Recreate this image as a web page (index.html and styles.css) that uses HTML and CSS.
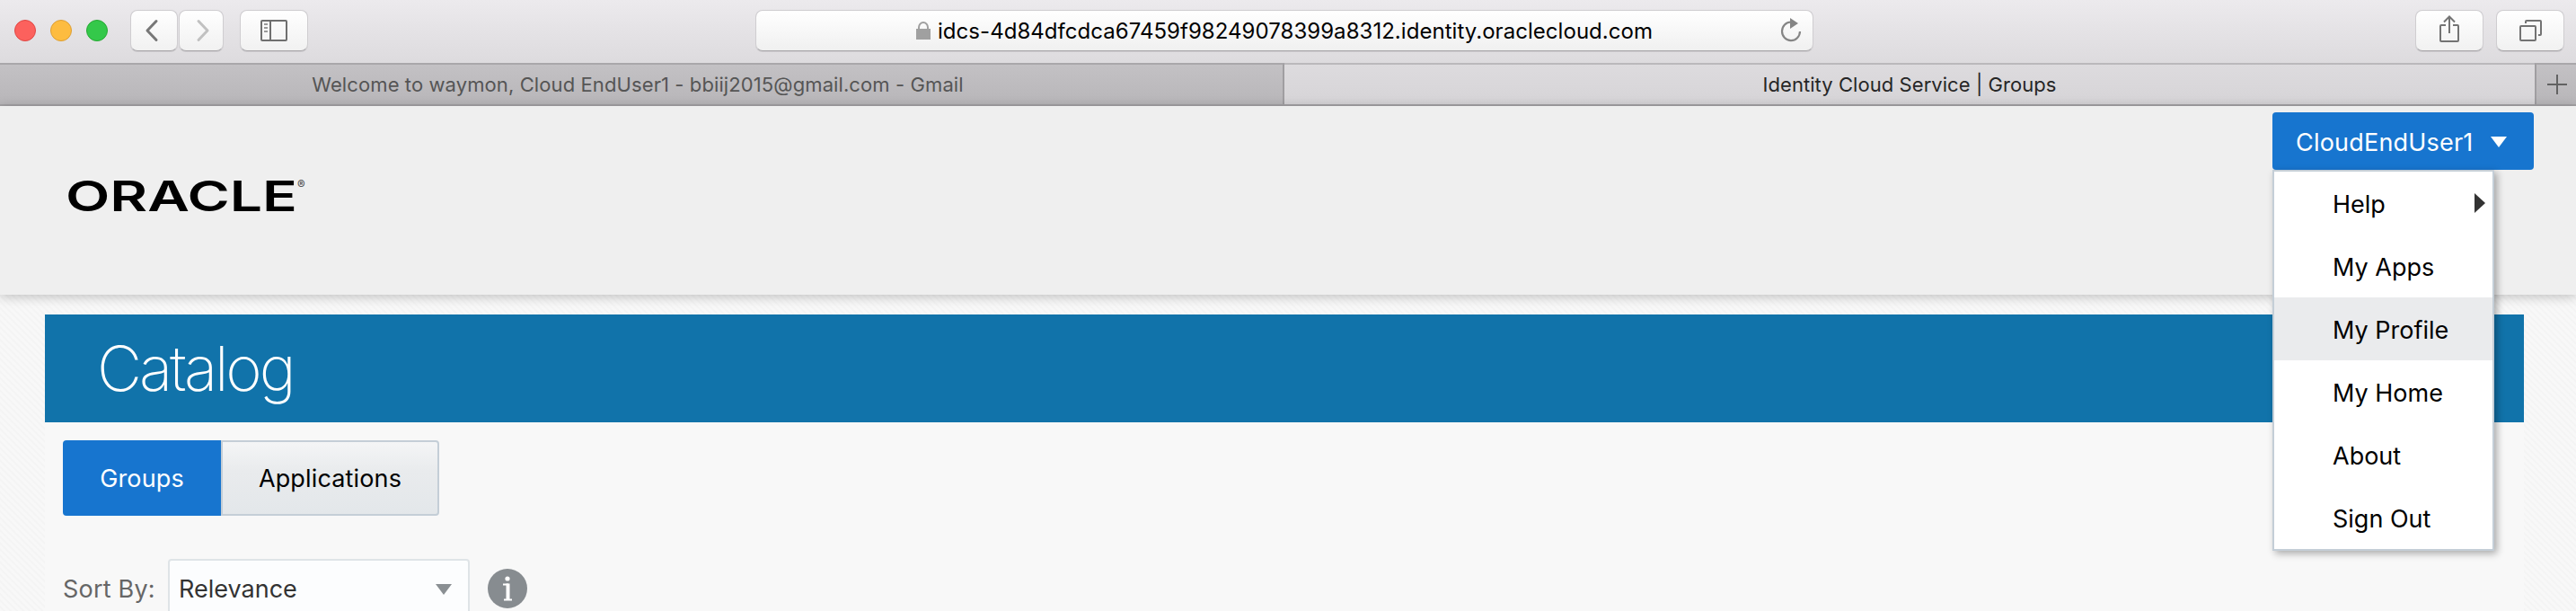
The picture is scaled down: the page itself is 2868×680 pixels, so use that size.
FILE: index.html
```html
<!DOCTYPE html>
<html lang="en">
<head>
<meta charset="utf-8">
<title>Identity Cloud Service | Groups</title>
<link rel="stylesheet" href="styles.css">
</head>
<body>
<div class="toolbar">
  <div class="lights"><i class="light red"></i><i class="light amber"></i><i class="light green"></i></div>
  <div class="nav">
    <div class="btn back"><svg width="16" height="26" viewBox="0 0 16 26"><path d="M13 2.500 3 13 13 23.500" fill="none" stroke="#777" stroke-width="3" stroke-linecap="round" stroke-linejoin="round"/></svg></div>
    <div class="btn forward"><svg width="16" height="26" viewBox="0 0 16 26"><path d="M3 2.500 13 13 3 23.500" fill="none" stroke="#c1c1c1" stroke-width="3" stroke-linecap="round" stroke-linejoin="round"/></svg></div>
  </div>
  <div class="btn wide"><svg width="30" height="24" viewBox="0 0 30 24" fill="none" stroke="#6f6f6f" stroke-width="2"><rect x="1" y="1" width="28" height="22" rx="1"/><path d="M11 1v22"/><path d="M4 5h4M4 9h4M4 13h4" stroke="#999"/></svg></div>
  <div class="address">
    <svg class="lock" width="16" height="20" viewBox="0 0 16 20"><rect y="8" width="16" height="12" fill="#a0a0a0"/><path d="M3 9V6.500a5 5.500 0 0 1 10 0V9" fill="none" stroke="#a0a0a0" stroke-width="2"/></svg>
    <span class="url">idcs-4d84dfcdca67459f98249078399a8312.identity.oraclecloud.com</span>
    <svg class="reload" width="24" height="28" viewBox="0 0 24 28"><path d="M12 4.500A10 10.300 0 1 0 22 15" fill="none" stroke="#858585" stroke-width="2.200"/><path d="M11 0 20 6 11 12z" fill="#858585"/></svg>
  </div>
  <div class="btn wide share"><svg width="24" height="32" viewBox="0 0 24 32" fill="none" stroke="#737373" stroke-width="2"><path d="M8 12H3q-1 0-1 1v16q0 1 1 1h18q1 0 1-1V13q0-1-1-1h-5"/><path d="M12 21V2.500M6 8.500 12 2.500 18 8.500"/></svg></div>
  <div class="btn wide tabs-btn"><svg width="26" height="26" viewBox="0 0 26 26" fill="none" stroke="#737373" stroke-width="2"><rect x="2" y="8" width="17" height="16" rx="1"/><path d="M8 5V3q0-1 1-1h15q1 0 1 1v14q0 1-1 1h-2"/></svg></div>
</div>
<div class="tabs">
  <div class="tab inactive"><span class="tab-one">Welcome to waymon, Cloud EndUser1 - bbiij2015@gmail.com - Gmail</span></div>
  <div class="tab active"><span class="tab-two">Identity Cloud Service | Groups</span></div>
  <div class="tab add"><svg width="22" height="22" viewBox="0 0 22 22"><path d="M11 0v22M0 11h22" stroke="#626262" stroke-width="2"/></svg></div>
</div>
<header class="header">
  <svg class="logo" width="270" height="40" viewBox="0 0 270 40"><text x="-3" y="36.500" textLength="258" lengthAdjust="spacingAndGlyphs" class="brand">ORACLE</text><text x="255" y="12" class="reg">®</text></svg>
  <div class="user">
    <div class="user-btn"><span>CloudEndUser1</span><svg width="18" height="12" viewBox="0 0 18 12"><path d="M0 0h18L9 12z" fill="#fff"/></svg></div>
    <div class="menu">
      <div class="item"><span>Help</span><svg width="12" height="22" viewBox="0 0 12 22"><path d="M0 0 12 11 0 22z" fill="#333"/></svg></div>
      <div class="item">My Apps</div>
      <div class="item hover">My Profile</div>
      <div class="item">My Home</div>
      <div class="item">About</div>
      <div class="item">Sign Out</div>
    </div>
  </div>
</header>
<main class="page">
  <div class="panel">
    <h1 class="banner"><span>Catalog</span></h1>
    <div class="switch"><div class="seg on">Groups</div><div class="seg off">Applications</div></div>
    <div class="sort">
      <span class="label">Sort By:</span>
      <div class="select"><span>Relevance</span><svg width="18" height="12" viewBox="0 0 18 12"><path d="M0 0h18L9 12z" fill="#8a8f93"/></svg></div>
      <svg class="info" width="44" height="44" viewBox="0 0 44 44"><circle cx="22" cy="22" r="22" fill="#878c90"/><circle cx="22" cy="11" r="2.600" fill="#fff"/><path d="M17 17.500h6M18 34.500h9" fill="none" stroke="#fff" stroke-width="2"/><path d="M22.500 16.500v18" stroke="#fff" stroke-width="4"/></svg>
    </div>
  </div>
</main>
</body>
</html>
```

FILE: styles.css
```css
* { box-sizing: border-box; }
body { margin: 0; width: 2868px; height: 680px; overflow: hidden; font-family: Inter, "Liberation Sans", sans-serif; background: #f8f8f8; color: #000; }
svg { display: block; flex: none; }

.toolbar { display: flex; align-items: flex-start; height: 70px; padding: 11px 13px 0 16px; background: linear-gradient(#eceaed, #dddbde); }
.lights { display: flex; gap: 16px; margin-top: 11px; width: 129px; }
.light { width: 24px; height: 24px; border-radius: 50%; border: 1px solid; }
.red { background: #fc615d; border-color: #df4744; }
.amber { background: #fdbc40; border-color: #dd9f34; }
.green { background: #34c84a; border-color: #27a934; }
.btn { display: flex; align-items: center; justify-content: center; height: 46px; border: 1px solid #cfcdd0; border-bottom-color: #aaa8ab; border-radius: 8px; background: linear-gradient(#fff, #f1f1f1); box-shadow: 0 1px 0 #cccacd; }
.nav { display: flex; gap: 1px; margin-right: 18px; }
.back { width: 53px; padding-right: 5px; }
.forward { width: 50px; padding-left: 3px; }
.wide { width: 76px; }
.address { display: flex; align-items: center; width: 1178px; height: 46px; margin-left: 498px; padding: 0 12px 0 178px; border: 1px solid #cfcdd0; border-bottom-color: #aaa8ab; border-radius: 8px; background: linear-gradient(#fff, #f0f0f0); box-shadow: 0 1px 0 #cccacd; }
.lock { margin-right: 8px; }
.url { flex: 1; padding-top: 2px; font-size: 24px; letter-spacing: 0.04px; line-height: 46px; white-space: nowrap; }
.share { margin-left: 670px; }
.share svg { margin-bottom: 4px; }
.tabs-btn { margin-left: 14px; }

.tabs { display: flex; height: 48px; border-bottom: 2px solid #a4a2a5; font-size: 22px; line-height: 44px; white-space: nowrap; }
.tab { display: flex; align-items: center; justify-content: center; border-top: 2px solid #a9a7aa; }
.tab-one { letter-spacing: 0.1px; }
.tab-two { letter-spacing: 0.06px; }
.inactive { width: 1430px; padding-right: 8px; border-right: 2px solid #a09ea1; color: #555; background: linear-gradient(#c3c1c4, #b8b6b9); }
.active { width: 1392px; border-top-color: #bab8bb; color: #262626; background: linear-gradient(#dddbde, #d6d4d7); }
.add { width: 46px; padding-left: 2px; border-left: 2px solid #a09ea1; background: linear-gradient(#c3c1c4, #b8b6b9); }

.header { position: relative; z-index: 2; display: flex; justify-content: space-between; height: 210px; padding: 7px 47px 0 76px; background: #efefef; box-shadow: 0 2px 12px rgba(0,0,0,.24); }
.logo { margin-top: 73px; overflow: visible; }
.brand { font-size: 47px; font-weight: 600; }
.reg { font-size: 13px; font-weight: 700; fill: #555; }
.user { position: relative; width: 291px; }
.user-btn { display: flex; align-items: center; justify-content: space-between; height: 64px; padding: 2px 30px 0 26px; border-radius: 4px; background: #1775cf; color: #fff; font-size: 27px; letter-spacing: 0.2px; }
.menu { position: absolute; top: 64px; left: 0; width: 247px; border: 2px solid #c4ced7; background: #fff; box-shadow: 3px 3px 8px rgba(0,0,0,.32); font-size: 27px; }
.item { display: flex; align-items: center; justify-content: space-between; height: 70px; padding: 3px 8px 0 65px; white-space: nowrap; }
.item svg { margin-bottom: 4px; }
.hover { background: #eaebed; }

.page { height: 352px; padding: 22px 58px 0 50px; background: repeating-linear-gradient(45deg, #f8f8f8 0 2px, #f4f4f4 3px 4px, #f8f8f8 5px); }
.panel { height: 330px; background: #f8f8f8; }
.banner { display: flex; align-items: center; height: 120px; margin: 0; padding: 0 0 0 58px; background: #1173aa; color: #fff; font-size: 69px; font-weight: 250; letter-spacing: -3.1px; line-height: 120px; }
.switch { display: flex; margin: 20px 0 0 20px; height: 84px; font-size: 27px; }
.seg { display: flex; align-items: center; justify-content: center; padding-top: 1px; letter-spacing: 0.15px; }
.on { width: 176px; border-radius: 4px 0 0 4px; background: #1775cf; color: #fff; }
.off { width: 243px; border: 2px solid #c4ced7; border-radius: 0 4px 4px 0; background: linear-gradient(#f4f5f6, #e9ebed 40%, #e3e7ea); }
.sort { display: flex; align-items: flex-start; height: 68px; margin: 48px 0 0 20px; font-size: 27px; line-height: 68px; }
.label { width: 117px; color: #666; letter-spacing: 0.2px; }
.select { display: flex; align-items: center; justify-content: space-between; width: 336px; height: 68px; padding: 0 18px 0 10px; border: 2px solid #dfe4e7; border-radius: 4px; background: #fcfdfe; color: #333; }
.info { margin: 11px 0 0 20px; }
```
